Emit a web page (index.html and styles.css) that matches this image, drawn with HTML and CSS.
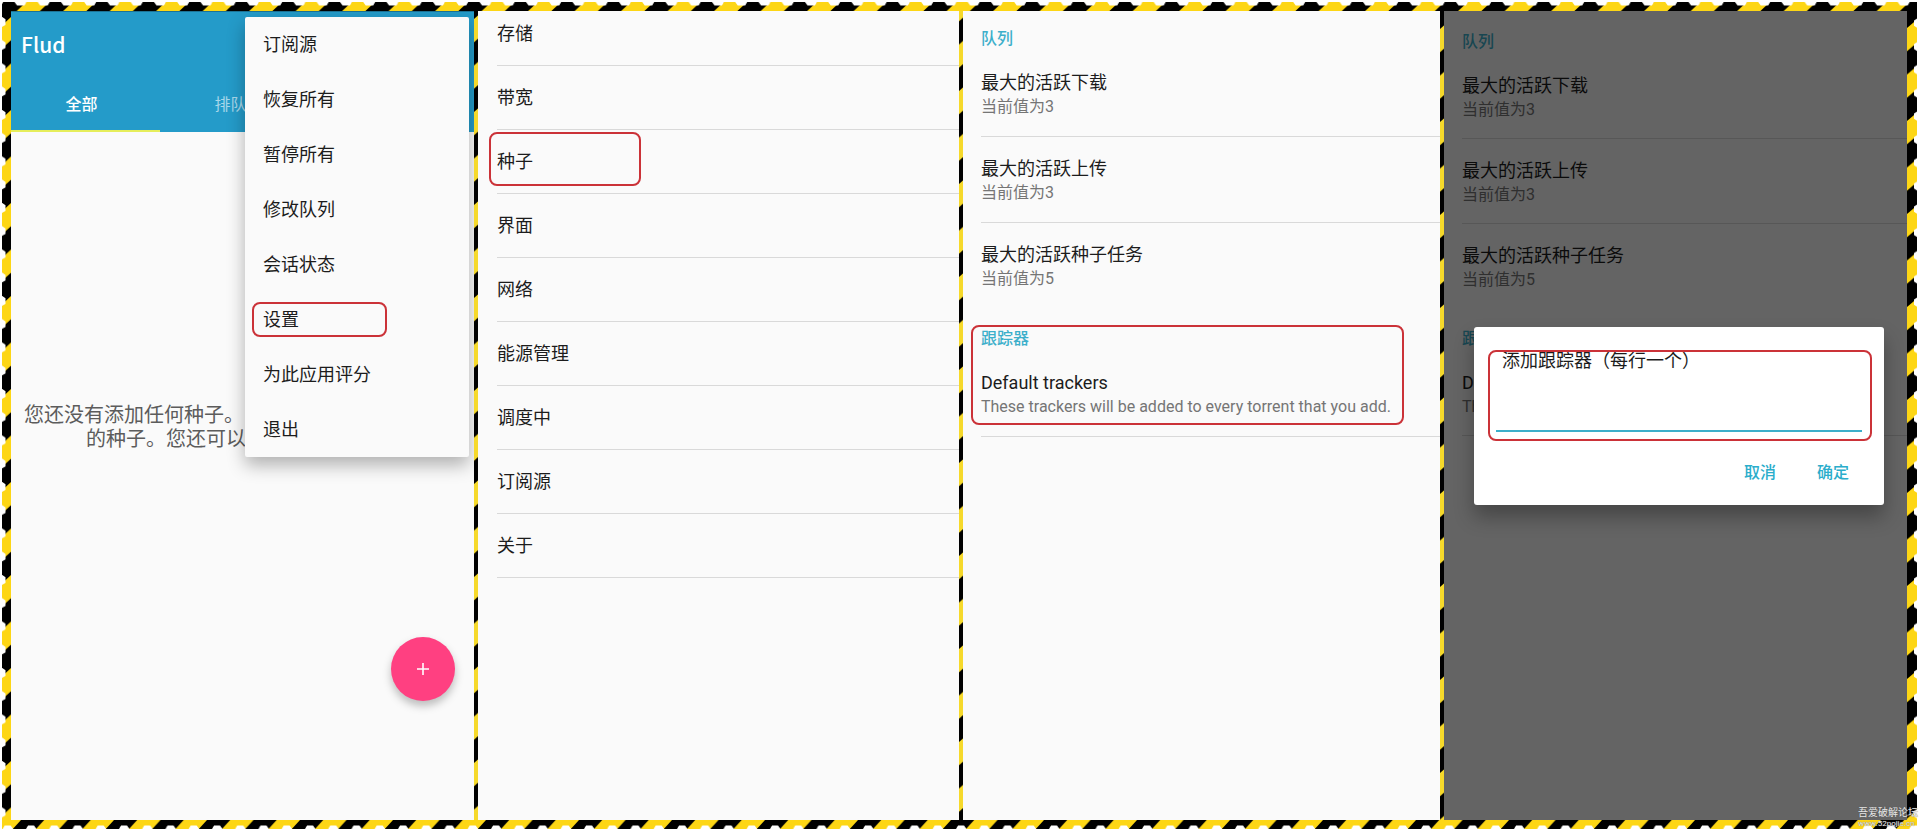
FILE: index.html
```html
<!DOCTYPE html>
<html lang="zh-CN">
<head>
<meta charset="utf-8">
<title>Flud</title>
<link rel="stylesheet" href="styles.css">
</head>
<body>
<div class="frame">
  <svg class="strip-h" aria-hidden="true">
    <defs>
      <pattern id="tape-top" width="46.5" height="9" patternUnits="userSpaceOnUse" patternTransform="translate(14.7 0)">
        <rect width="47" height="9" fill="#fdd615"/>
        <path d="M23.2 9H46.5L56 0H32.8ZM-23.3 9H0L9.5 0H-13.7Z" fill="#000"/>
        <path d="M21 0L23.5 3.5H31L33 0ZM-2.2 0L.3 3.5H7.8L9.8 0ZM44.3 0L46.8 3.5V0Z" fill="#fff"/>
      </pattern>
      <pattern id="tape-bottom" width="46.5" height="9" patternUnits="userSpaceOnUse" patternTransform="translate(19 0)">
        <rect width="47" height="9" fill="#fdd615"/>
        <path d="M0 0H23.2L15 9H-8.2ZM46.5 0H69.7L61 9H38.3Z" fill="#000"/>
        <path d="M5 9L7 5.5H13L15.5 9ZM28.2 9L30.2 5.5H36.2L38.7 9Z" fill="#fff"/>
      </pattern>
      <pattern id="tape-left" width="9" height="46.5" patternUnits="userSpaceOnUse" patternTransform="translate(0 6)">
        <rect width="9" height="47" fill="#fdd615"/>
        <path d="M9 23.2V46.5L0 55V31.5ZM9 -23.3V0L0 8.5V-15Z" fill="#000"/>
        <path d="M0 23L3.5 25.5V31L0 33ZM0 -.2L3.5 2.3V7.8L0 9.8Z" fill="#fff"/>
      </pattern>
      <pattern id="tape-right" width="10" height="46.5" patternUnits="userSpaceOnUse" patternTransform="translate(0 17)">
        <rect width="10" height="47" fill="#fdd615"/>
        <path d="M0 23.2V46.5L10 38V14.7Z" fill="#000"/>
        <path d="M10 14L7 16V21L10 23ZM10 37.2L7 39.2V44.2L10 46.2Z" fill="#fff"/>
      </pattern>
      <pattern id="tape-inner" width="5" height="46.5" patternUnits="userSpaceOnUse" patternTransform="translate(0 8)">
        <rect width="5" height="47" fill="#f6d92b"/>
        <path d="M0 23.2V46.5L5 42V18.7Z" fill="#000"/>
      </pattern>
      <pattern id="tape-inner-low" width="5" height="46.5" patternUnits="userSpaceOnUse" patternTransform="translate(0 -13)">
        <rect width="5" height="47" fill="#f6d92b"/>
        <path d="M0 23.2V46.5L5 42V18.7Z" fill="#000"/>
      </pattern>
      <pattern id="tape-inner-high" width="5" height="46.5" patternUnits="userSpaceOnUse" patternTransform="translate(0 18)">
        <rect width="5" height="47" fill="#f6d92b"/>
        <path d="M0 23.2V46.5L5 42V18.7Z" fill="#000"/>
      </pattern>
    </defs>
    <rect width="100%" height="9" fill="url(#tape-top)"/>
  </svg>

  <main class="screens">
    <svg class="strip-v" aria-hidden="true"><rect width="100%" height="100%" fill="url(#tape-left)"/></svg>

    <section class="screen">
      <header class="app-bar">
        <h1 class="app-title">Flud</h1>
        <nav class="tabs">
          <button class="tab tab-active" type="button">全部</button>
          <button class="tab" type="button">排队</button>
        </nav>
      </header>
      <p class="empty">您还没有添加任何种子。<span class="empty-line">的种子。您还可以</span></p>
      <button class="fab" type="button" aria-label="添加">
        <svg width="12" height="12" viewBox="0 0 12 12"><path d="M6 0V12M0 6H12" stroke="#fff" stroke-width="1.6"/></svg>
      </button>
      <ul class="menu">
        <li class="menu-item"><button type="button">订阅源</button></li>
        <li class="menu-item"><button type="button">恢复所有</button></li>
        <li class="menu-item"><button type="button">暂停所有</button></li>
        <li class="menu-item"><button type="button">修改队列</button></li>
        <li class="menu-item"><button type="button">会话状态</button></li>
        <li class="menu-item"><button type="button">设置</button><span class="mark mark-menu"></span></li>
        <li class="menu-item"><button type="button">为此应用评分</button></li>
        <li class="menu-item"><button type="button">退出</button></li>
      </ul>
    </section>

    <svg class="strip-v" aria-hidden="true"><rect width="100%" height="100%" fill="url(#tape-inner)"/></svg>

    <section class="screen">
      <ul class="settings">
        <li class="setting"><button type="button">存储</button></li>
        <li class="setting"><button type="button">带宽</button></li>
        <li class="setting"><button type="button">种子</button><span class="mark mark-setting"></span></li>
        <li class="setting"><button type="button">界面</button></li>
        <li class="setting"><button type="button">网络</button></li>
        <li class="setting"><button type="button">能源管理</button></li>
        <li class="setting"><button type="button">调度中</button></li>
        <li class="setting"><button type="button">订阅源</button></li>
        <li class="setting"><button type="button">关于</button></li>
      </ul>
    </section>

    <svg class="strip-v" aria-hidden="true"><rect width="100%" height="100%" fill="url(#tape-inner-low)"/></svg>

    <section class="screen prefs">
      <div class="group">
        <h2 class="group-title">队列</h2>
        <div class="pref"><p class="pref-name">最大的活跃下载</p><p class="pref-note">当前值为3</p></div>
        <div class="pref"><p class="pref-name">最大的活跃上传</p><p class="pref-note">当前值为3</p></div>
        <div class="pref"><p class="pref-name">最大的活跃种子任务</p><p class="pref-note">当前值为5</p></div>
      </div>
      <div class="group">
        <h2 class="group-title">跟踪器</h2>
        <div class="pref"><p class="pref-name">Default trackers</p><p class="pref-note">These trackers will be added to every torrent that you add.</p></div>
        <span class="mark mark-group"></span>
      </div>
    </section>

    <svg class="strip-v" aria-hidden="true"><rect width="100%" height="100%" fill="url(#tape-inner-high)"/></svg>

    <section class="screen prefs prefs-tight">
      <div class="group">
        <h2 class="group-title">队列</h2>
        <div class="pref"><p class="pref-name">最大的活跃下载</p><p class="pref-note">当前值为3</p></div>
        <div class="pref"><p class="pref-name">最大的活跃上传</p><p class="pref-note">当前值为3</p></div>
        <div class="pref"><p class="pref-name">最大的活跃种子任务</p><p class="pref-note">当前值为5</p></div>
      </div>
      <div class="group">
        <h2 class="group-title">跟踪器</h2>
        <div class="pref"><p class="pref-name">Default trackers</p><p class="pref-note">These trackers</p></div>
      </div>
      <div class="scrim">
        <form class="dialog">
          <div class="field">
            <label class="field-label" for="trackers">添加跟踪器（每行一个）</label>
            <textarea class="field-input" id="trackers" rows="2"></textarea>
            <span class="mark mark-field"></span>
          </div>
          <div class="actions">
            <button class="action" type="button">取消</button>
            <button class="action" type="button">确定</button>
          </div>
        </form>
      </div>
    </section>

    <svg class="strip-v" aria-hidden="true"><rect width="100%" height="100%" fill="url(#tape-right)"/></svg>
  </main>

  <svg class="strip-h" aria-hidden="true"><rect width="100%" height="9" fill="url(#tape-bottom)"/></svg>
  <div class="watermark"><p>吾爱破解论坛</p><p>www.52pojie.cn</p></div>
</div>
</body>
</html>
```

FILE: styles.css
```css
* {
  box-sizing: border-box;
}

body,
h1,
h2,
p,
ul {
  margin: 0;
  padding: 0;
}

body {
  background: #fff;
  color: #1c1c1c;
  font: 18px/24px Roboto, "Noto Sans CJK SC", sans-serif;
}

ul {
  list-style: none;
}

button {
  border: 0;
  padding: 0;
  background: none;
  color: inherit;
  font: inherit;
  text-align: left;
  cursor: pointer;
}

.frame {
  position: relative;
  display: flex;
  flex-direction: column;
  min-height: 100vh;
  padding: 2px;
}

.strip-h {
  display: block;
  width: 100%;
  height: 9px;
  flex: none;
}

.strip-v {
  display: block;
  width: 100%;
  height: 100%;
}

.screens {
  flex: 1;
  display: grid;
  grid-template-columns: 9px 463fr 4px 481fr 4px 477fr 4px 463fr 10px;
  grid-template-rows: 1fr;
}

.screen {
  position: relative;
  min-width: 0;
  overflow: hidden;
  background: #fafafa;
}

.mark {
  position: absolute;
  border: 2px solid #cb3238;
  border-radius: 8px;
  pointer-events: none;
}

.app-bar {
  border-top: 1px solid #1c7396;
  background: #249bc9;
  color: #fff;
}

.app-title {
  padding: 20px 10px 22px;
  font: 500 21px/24px "Noto Sans CJK SC", sans-serif;
}

.tabs {
  display: flex;
}

.tab {
  width: 149px;
  height: 54px;
  padding: 2px 8px 0 0;
  border-bottom: 2px solid transparent;
  color: #a8d7ea;
  font-size: 16px;
  text-align: center;
}

.tab-active {
  border-color: #e6ee5b;
  color: #fff;
  font-weight: 500;
}

.empty {
  padding: 271px 0 0 13px;
  color: #5c5c5c;
  font-size: 20px;
  white-space: nowrap;
}

.empty-line {
  display: block;
  padding-left: 62px;
}

.fab {
  position: absolute;
  right: 19px;
  bottom: 119px;
  display: grid;
  place-items: center;
  width: 64px;
  height: 64px;
  border-radius: 50%;
  background: #ff4081;
  box-shadow: 0 5px 8px rgba(0, 0, 0, 0.25);
}

.menu {
  position: absolute;
  top: 6px;
  right: 5px;
  width: 224px;
  border-radius: 2px;
  background: #fafafa;
  box-shadow: 0 8px 18px rgba(0, 0, 0, 0.3);
}

.menu-item {
  position: relative;
}

.menu-item button {
  display: block;
  width: 100%;
  height: 55px;
  padding: 0 18px;
}

.mark-menu {
  inset: 10px 82px 10px 7px;
}

.settings {
  margin-top: -9px;
  padding-left: 19px;
}

.setting {
  position: relative;
  border-bottom: 1px solid #d9d9d9;
}

.setting button {
  display: block;
  width: 100%;
  height: 63px;
}

.mark-setting {
  top: 2px;
  bottom: 7px;
  left: -8px;
  width: 152px;
}

.prefs {
  padding-left: 18px;
}

.group {
  position: relative;
}

.group-title {
  padding-top: 16px;
  color: #3cafca;
  font-size: 16px;
  font-weight: 500;
  line-height: 24px;
}

.group + .group .group-title {
  padding-top: 18px;
}

.pref {
  padding: 20px 0 17px;
  border-bottom: 1px solid #d9d9d9;
}

.group:first-child .pref:last-child {
  border-color: transparent;
}

.pref-note {
  color: #757575;
  font-size: 16px;
  white-space: nowrap;
}

.mark-group {
  top: 16px;
  bottom: 12px;
  left: -10px;
  width: 433px;
}

.prefs-tight .group-title {
  padding-top: 19px;
}

.prefs-tight .pref {
  padding-bottom: 16px;
}

.scrim {
  position: absolute;
  inset: 0;
  padding: 316px 23px 0 30px;
  background: rgba(0, 0, 0, 0.6);
}

.dialog {
  padding: 23px 12px 20px 14px;
  border-radius: 3px;
  background: #fff;
  box-shadow: 0 12px 20px rgba(0, 0, 0, 0.3);
}

.field {
  position: relative;
  height: 91px;
  padding: 0 10px 0 8px;
}

.field-label {
  display: block;
  padding-left: 6px;
  line-height: 22px;
}

.field-input {
  display: block;
  width: 100%;
  height: 60px;
  padding: 0 6px;
  border: 0;
  border-bottom: 2px solid #3cafca;
  background: none;
  font: inherit;
  resize: none;
  outline: 0;
}

.mark-field {
  inset: 0;
}

.actions {
  display: flex;
  justify-content: flex-end;
  gap: 41px;
  padding: 20px 23px 0 0;
}

.action {
  color: #2badcb;
  font-size: 16px;
  font-weight: 500;
}

.watermark {
  position: absolute;
  right: 1px;
  bottom: 2px;
  color: #e8e8e8;
  font-size: 10px;
  line-height: 11px;
  text-shadow: 0 0 1px #555;
}

.watermark p + p {
  font-size: 8px;
}
```
